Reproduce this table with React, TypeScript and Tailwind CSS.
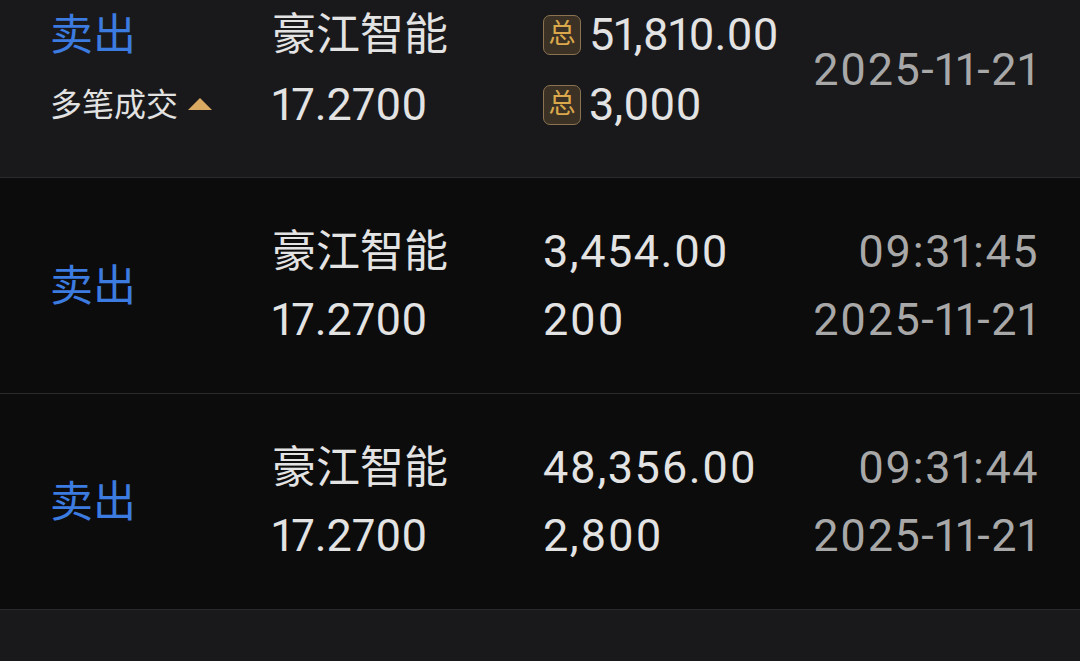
import React from "react";

const font = { fontFamily: 'Roboto, "Noto Sans CJK SC", sans-serif' };

function Badge() {
  return (
    <span className="mr-[8px] inline-flex h-[40px] w-[38px] items-center justify-center rounded-[7px] border-[1.5px] border-[#8a7350] bg-[#3b3225] text-[27px] leading-none text-[#dba94c]">
      总
    </span>
  );
}

function Row({
  multi,
  amount,
  qty,
  time,
  bg,
}: {
  multi?: boolean;
  amount: string;
  qty: string;
  time?: string;
  bg: string;
}) {
  const lh = multi ? "leading-[70px]" : "leading-[68px]";
  return (
    <div className={`flex h-[216px] items-center border-b border-[#2a2a2c] pl-[50px] pr-[41px] ${bg}`}>
      <div className="flex w-[222px] flex-col justify-center">
        <div className="text-[43px] leading-[70px] text-[#3c7be0]">卖出</div>
        {multi && (
          <div className="flex items-center text-[32px] leading-[70px] text-[#e2e2e2]">
            多笔成交
            <svg width="26" height="14" viewBox="0 0 26 14" className="ml-[9px] mt-[-2px]">
              <polygon points="13,1 25,13 1,13" fill="#d8aa62" />
            </svg>
          </div>
        )}
      </div>
      <div className="flex w-[271px] flex-col text-[#e3e3e3]">
        <div className={`text-[44px] ${lh}`}>豪江智能</div>
        <div className={`text-[45px] proportional-nums ${lh}`}>17.2700</div>
      </div>
      <div
        className={`flex flex-1 flex-col text-[45px] proportional-nums text-[#e3e3e3] ${
          multi ? "" : "tracking-[1.5px]"
        }`}
      >
        <div className={`flex items-center ${lh}`}>
          {multi && <Badge />}
          {amount}
        </div>
        <div className={`flex items-center ${lh}`}>
          {multi && <Badge />}
          {qty}
        </div>
      </div>
      <div className="flex flex-col items-end text-[45px] tracking-[1.5px] proportional-nums leading-[68px] text-[#a8a8a8]">
        {time && <div>{time}</div>}
        <div>2025-11-21</div>
      </div>
    </div>
  );
}

export default function App() {
  return (
    <div className="h-[661px] w-[1080px] overflow-hidden bg-[#19191b]" style={font}>
      <div className="mt-[-38px]">
        <Row multi amount="51,810.00" qty="3,000" bg="bg-[#19191b]" />
        <Row amount="3,454.00" qty="200" time="09:31:45" bg="bg-[#0c0c0c]" />
        <Row amount="48,356.00" qty="2,800" time="09:31:44" bg="bg-[#0c0c0c]" />
      </div>
    </div>
  );
}
